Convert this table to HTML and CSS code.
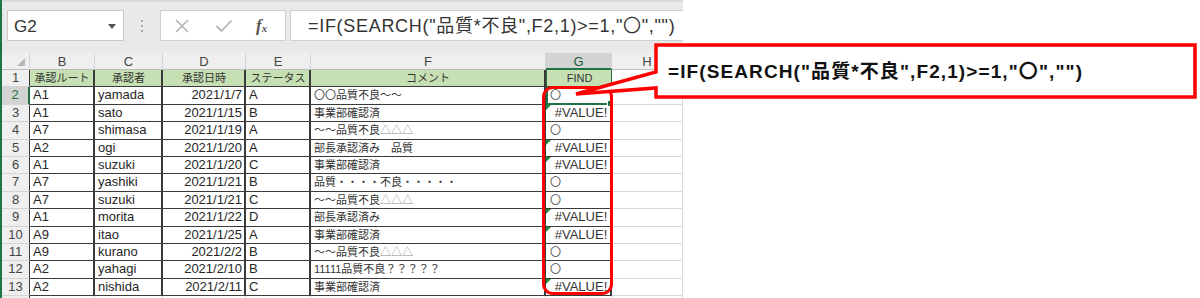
FILE: index.html
```html
<!DOCTYPE html>
<html lang="ja">
<head>
<meta charset="utf-8">
<title>Excel SEARCH</title>
<link rel="stylesheet" href="styles.css">
</head>
<body>
<div class="page">
  <div class="excel">
    <div class="toolbar">
      <div class="namebox"><span class="nb-text">G2</span><span class="nb-arrow"></span></div>
      <div class="grip"><span></span><span></span><span></span></div>
      <div class="fxbox">
        <span class="ic-x">
          <svg width="16" height="16" viewBox="0 0 16 16"><path d="M2 2 L14 14 M14 2 L2 14" stroke="#b4b4b4" stroke-width="1.6" fill="none"/></svg>
        </span>
        <span class="ic-ok">
          <svg width="18" height="16" viewBox="0 0 18 16"><path d="M1.5 8 L6.5 13 L16.5 2.5" stroke="#b4b4b4" stroke-width="1.8" fill="none"/></svg>
        </span>
        <span class="ic-fx">f<sub>x</sub></span>
      </div>
      <div class="formula">=IF(SEARCH("品質*不良",F2,1)&gt;=1,"〇","")</div>
    </div>

    <div class="sheet">
      <div class="ch corner"><span class="tri"></span></div>
      <div class="ch">B</div><div class="ch">C</div><div class="ch">D</div><div class="ch">E</div><div class="ch">F</div><div class="ch sel">G</div><div class="ch">H</div>

      <div class="rh">1</div>
      <div class="c hd">承認ルート</div><div class="c hd">承認者</div><div class="c hd">承認日時</div><div class="c hd">ステータス</div><div class="c hd">コメント</div><div class="c hd g">FIND</div><div class="c e"></div>

      <div class="rh sel">2</div>
      <div class="c">A1</div><div class="c">yamada</div><div class="c r">2021/1/7</div><div class="c">A</div><div class="c ja">〇〇品質不良～～</div><div class="c g ok active">〇<span class="handle"></span></div><div class="c e"></div>

      <div class="rh">3</div>
      <div class="c">A1</div><div class="c">sato</div><div class="c r">2021/1/15</div><div class="c">B</div><div class="c ja">事業部確認済</div><div class="c g err">#VALUE!</div><div class="c e"></div>

      <div class="rh">4</div>
      <div class="c">A7</div><div class="c">shimasa</div><div class="c r">2021/1/19</div><div class="c">A</div><div class="c ja">～～品質不良<span class="lt">△△△</span></div><div class="c g ok">〇</div><div class="c e"></div>

      <div class="rh">5</div>
      <div class="c">A2</div><div class="c">ogi</div><div class="c r">2021/1/20</div><div class="c">A</div><div class="c ja">部長承認済み　品質</div><div class="c g err">#VALUE!</div><div class="c e"></div>

      <div class="rh">6</div>
      <div class="c">A1</div><div class="c">suzuki</div><div class="c r">2021/1/20</div><div class="c">C</div><div class="c ja">事業部確認済</div><div class="c g err">#VALUE!</div><div class="c e"></div>

      <div class="rh">7</div>
      <div class="c">A7</div><div class="c">yashiki</div><div class="c r">2021/1/21</div><div class="c">B</div><div class="c ja">品質・・・・不良・・・・・</div><div class="c g ok">〇</div><div class="c e"></div>

      <div class="rh">8</div>
      <div class="c">A7</div><div class="c">suzuki</div><div class="c r">2021/1/21</div><div class="c">C</div><div class="c ja">～～品質不良<span class="lt">△△△</span></div><div class="c g ok">〇</div><div class="c e"></div>

      <div class="rh">9</div>
      <div class="c">A1</div><div class="c">morita</div><div class="c r">2021/1/22</div><div class="c">D</div><div class="c ja">部長承認済み</div><div class="c g err">#VALUE!</div><div class="c e"></div>

      <div class="rh">10</div>
      <div class="c">A9</div><div class="c">itao</div><div class="c r">2021/1/25</div><div class="c">A</div><div class="c ja">事業部確認済</div><div class="c g err">#VALUE!</div><div class="c e"></div>

      <div class="rh">11</div>
      <div class="c">A9</div><div class="c">kurano</div><div class="c r">2021/2/2</div><div class="c">B</div><div class="c ja">～～品質不良<span class="lt">△△△</span></div><div class="c g ok">〇</div><div class="c e"></div>

      <div class="rh">12</div>
      <div class="c">A2</div><div class="c">yahagi</div><div class="c r">2021/2/10</div><div class="c">B</div><div class="c ja">11111品質不良？？？？？</div><div class="c g ok">〇</div><div class="c e"></div>

      <div class="rh">13</div>
      <div class="c">A2</div><div class="c">nishida</div><div class="c r">2021/2/11</div><div class="c">C</div><div class="c ja">事業部確認済</div><div class="c g err">#VALUE!</div><div class="c e"></div>

      <div class="rh"></div>
      <div class="c e"></div><div class="c e"></div><div class="c e"></div><div class="c e"></div><div class="c e"></div><div class="c e"></div><div class="c e"></div>
    </div>
  </div>

  <div class="highlight"></div>
  <svg class="callout-shape" width="1200" height="298" viewBox="0 0 1200 298">
    <path d="M656 72 V45 H1195 V97 H656 V88 L576 94 Z" fill="#ffffff" stroke="#ff0000" stroke-width="3.5" stroke-linejoin="miter"/>
  </svg>
  <div class="callout-text">=IF(SEARCH("品質*不良",F2,1)&gt;=1,"〇","")</div>
</div>
</body>
</html>
```

FILE: styles.css
```css
html, body {
  margin: 0;
  padding: 0;
  background: #ffffff;
}

.page {
  position: relative;
  width: 1200px;
  height: 298px;
  overflow: hidden;
  font-family: "Liberation Sans", "Noto Sans CJK JP", sans-serif;
  color: #262626;
}

.excel {
  width: 681px;
  height: 298px;
  border-left: 2px solid #217346;
  background: #e6e6e6;
  overflow: hidden;
}

/* ---------- formula bar ---------- */
.toolbar {
  height: 53px;
  box-sizing: border-box;
  padding-top: 10px;
  border-top: 2px solid #dadada;
  display: flex;
  align-items: flex-start;
  background: #e9e9e9;
}

.namebox {
  margin-left: 5px;
  margin-top: -2px;
  width: 117px;
  height: 31px;
  box-sizing: border-box;
  background: #ffffff;
  border: 1px solid #c8c8c8;
  display: flex;
  align-items: center;
  justify-content: space-between;
  padding: 0 7px 0 6px;
}

.nb-text {
  font-size: 17px;
  color: #333;
  padding-top: 2px;
}

.nb-arrow {
  width: 0;
  height: 0;
  border-left: 4.5px solid transparent;
  border-right: 4.5px solid transparent;
  border-top: 5px solid #555;
  margin-top: 1px;
}

.grip {
  width: 36px;
  height: 31px;
  margin-top: -2px;
  display: flex;
  flex-direction: column;
  align-items: center;
  justify-content: center;
  gap: 3px;
}

.grip span {
  width: 2px;
  height: 2px;
  background: #a8a8a8;
}

.fxbox {
  width: 126px;
  height: 31px;
  margin-top: -2px;
  box-sizing: border-box;
  background: #ffffff;
  border: 1px solid #d0d0d0;
  display: flex;
  align-items: center;
  padding-left: 13px;
}

.ic-x { width: 16px; height: 16px; display: flex; }
.ic-ok { width: 18px; height: 16px; display: flex; margin-left: 25px; }
.ic-fx {
  margin-left: 23px;
  font-family: "Liberation Serif", serif;
  font-style: italic;
  font-weight: bold;
  font-size: 17px;
  color: #555;
  line-height: 1;
}
.ic-fx sub {
  font-size: 11px;
  vertical-align: -1px;
}

.formula {
  margin-left: 4px;
  margin-top: -2px;
  flex: 1;
  height: 31px;
  box-sizing: border-box;
  background: #ffffff;
  border: 1px solid #d0d0d0;
  border-right: none;
  padding-left: 17px;
  font-size: 18px;
  letter-spacing: 0.7px;
  line-height: 31px;
  color: #333;
  white-space: nowrap;
  overflow: hidden;
}

/* ---------- sheet grid ---------- */
.sheet {
  display: grid;
  grid-template-columns: 28px 65px 68px 83px 65px 235px 66px 71px;
  grid-template-rows: 17px repeat(14, 17.4px);
  background: #ffffff;
}

.ch {
  background: #efefef;
  border-right: 1px solid #d4d4d4;
  border-bottom: 1px solid #bdbdbd;
  font-size: 13px;
  color: #444;
  text-align: center;
  line-height: 17px;
  box-sizing: border-box;
}

.ch.sel {
  background: #d3d3d3;
  border-bottom: 2px solid #217346;
  color: #1f5e38;
}

.corner {
  position: relative;
  background: #efefef;
}

.tri {
  position: absolute;
  right: 4px;
  bottom: 3px;
  width: 0;
  height: 0;
  border-left: 8px solid transparent;
  border-bottom: 8px solid #b8b8b8;
}

.rh {
  background: #efefef;
  border-right: 1px solid #3a3a3a;
  border-bottom: 1px solid #d4d4d4;
  font-size: 13px;
  color: #444;
  text-align: center;
  line-height: 16px;
  box-sizing: border-box;
}

.rh.sel {
  background: #d3d3d3;
  color: #217346;
  border-right: 2px solid #217346;
}

.c {
  position: relative;
  box-sizing: border-box;
  border-right: 2px solid #3a3a3a;
  border-bottom: 1px solid #3a3a3a;
  padding: 0 2px 0 3px;
  font-size: 13px;
  line-height: 16px;
  white-space: nowrap;
  overflow: hidden;
  color: #262626;
}

.c.r { text-align: right; }

.c.ja {
  font-size: 11px;
  color: #333;
}

.lt { color: #8a8a8a; }

.c.hd {
  background: #c6e0b4;
  font-size: 11px;
  text-align: center;
  color: #333;
}

.c.e {
  border-right: 1px solid #dadada;
  border-bottom: 1px solid #dadada;
}

.c.g {
  padding-left: 4px;
}

.c.ok {
  font-size: 11px;
  color: #444;
}

.c.hd.g {
  padding-left: 3px;
  border-left: 1px solid #2f6b3d;
  border-right: 1px solid #2f6b3d;
}

.c.err {
  text-align: center;
  padding-left: 6px;
  padding-right: 0;
  color: #333;
}

.c.err::before {
  content: "";
  position: absolute;
  left: 0;
  top: 0;
  width: 0;
  height: 0;
  border-top: 5px solid #1e8a3c;
  border-right: 5px solid transparent;
}

.c.active {
  overflow: visible;
  border-bottom: 2px solid #217346;
  box-shadow: inset 2px 0 0 #217346;
}

.handle {
  position: absolute;
  right: -4px;
  bottom: -4px;
  width: 5px;
  height: 5px;
  background: #217346;
  border: 1px solid #ffffff;
}

/* ---------- annotations ---------- */
.highlight {
  position: absolute;
  left: 542px;
  top: 86px;
  width: 71px;
  height: 209px;
  box-sizing: border-box;
  border: 3.5px solid #ff0000;
  border-radius: 11px;
}

.callout-shape {
  position: absolute;
  left: 0;
  top: 0;
  pointer-events: none;
}

.callout-text {
  position: absolute;
  left: 668px;
  top: 59px;
  font-family: "Liberation Sans", "Noto Sans CJK JP", sans-serif;
  font-weight: bold;
  font-size: 19px;
  letter-spacing: 1.1px;
  line-height: 26px;
  color: #111;
  white-space: nowrap;
}
```
